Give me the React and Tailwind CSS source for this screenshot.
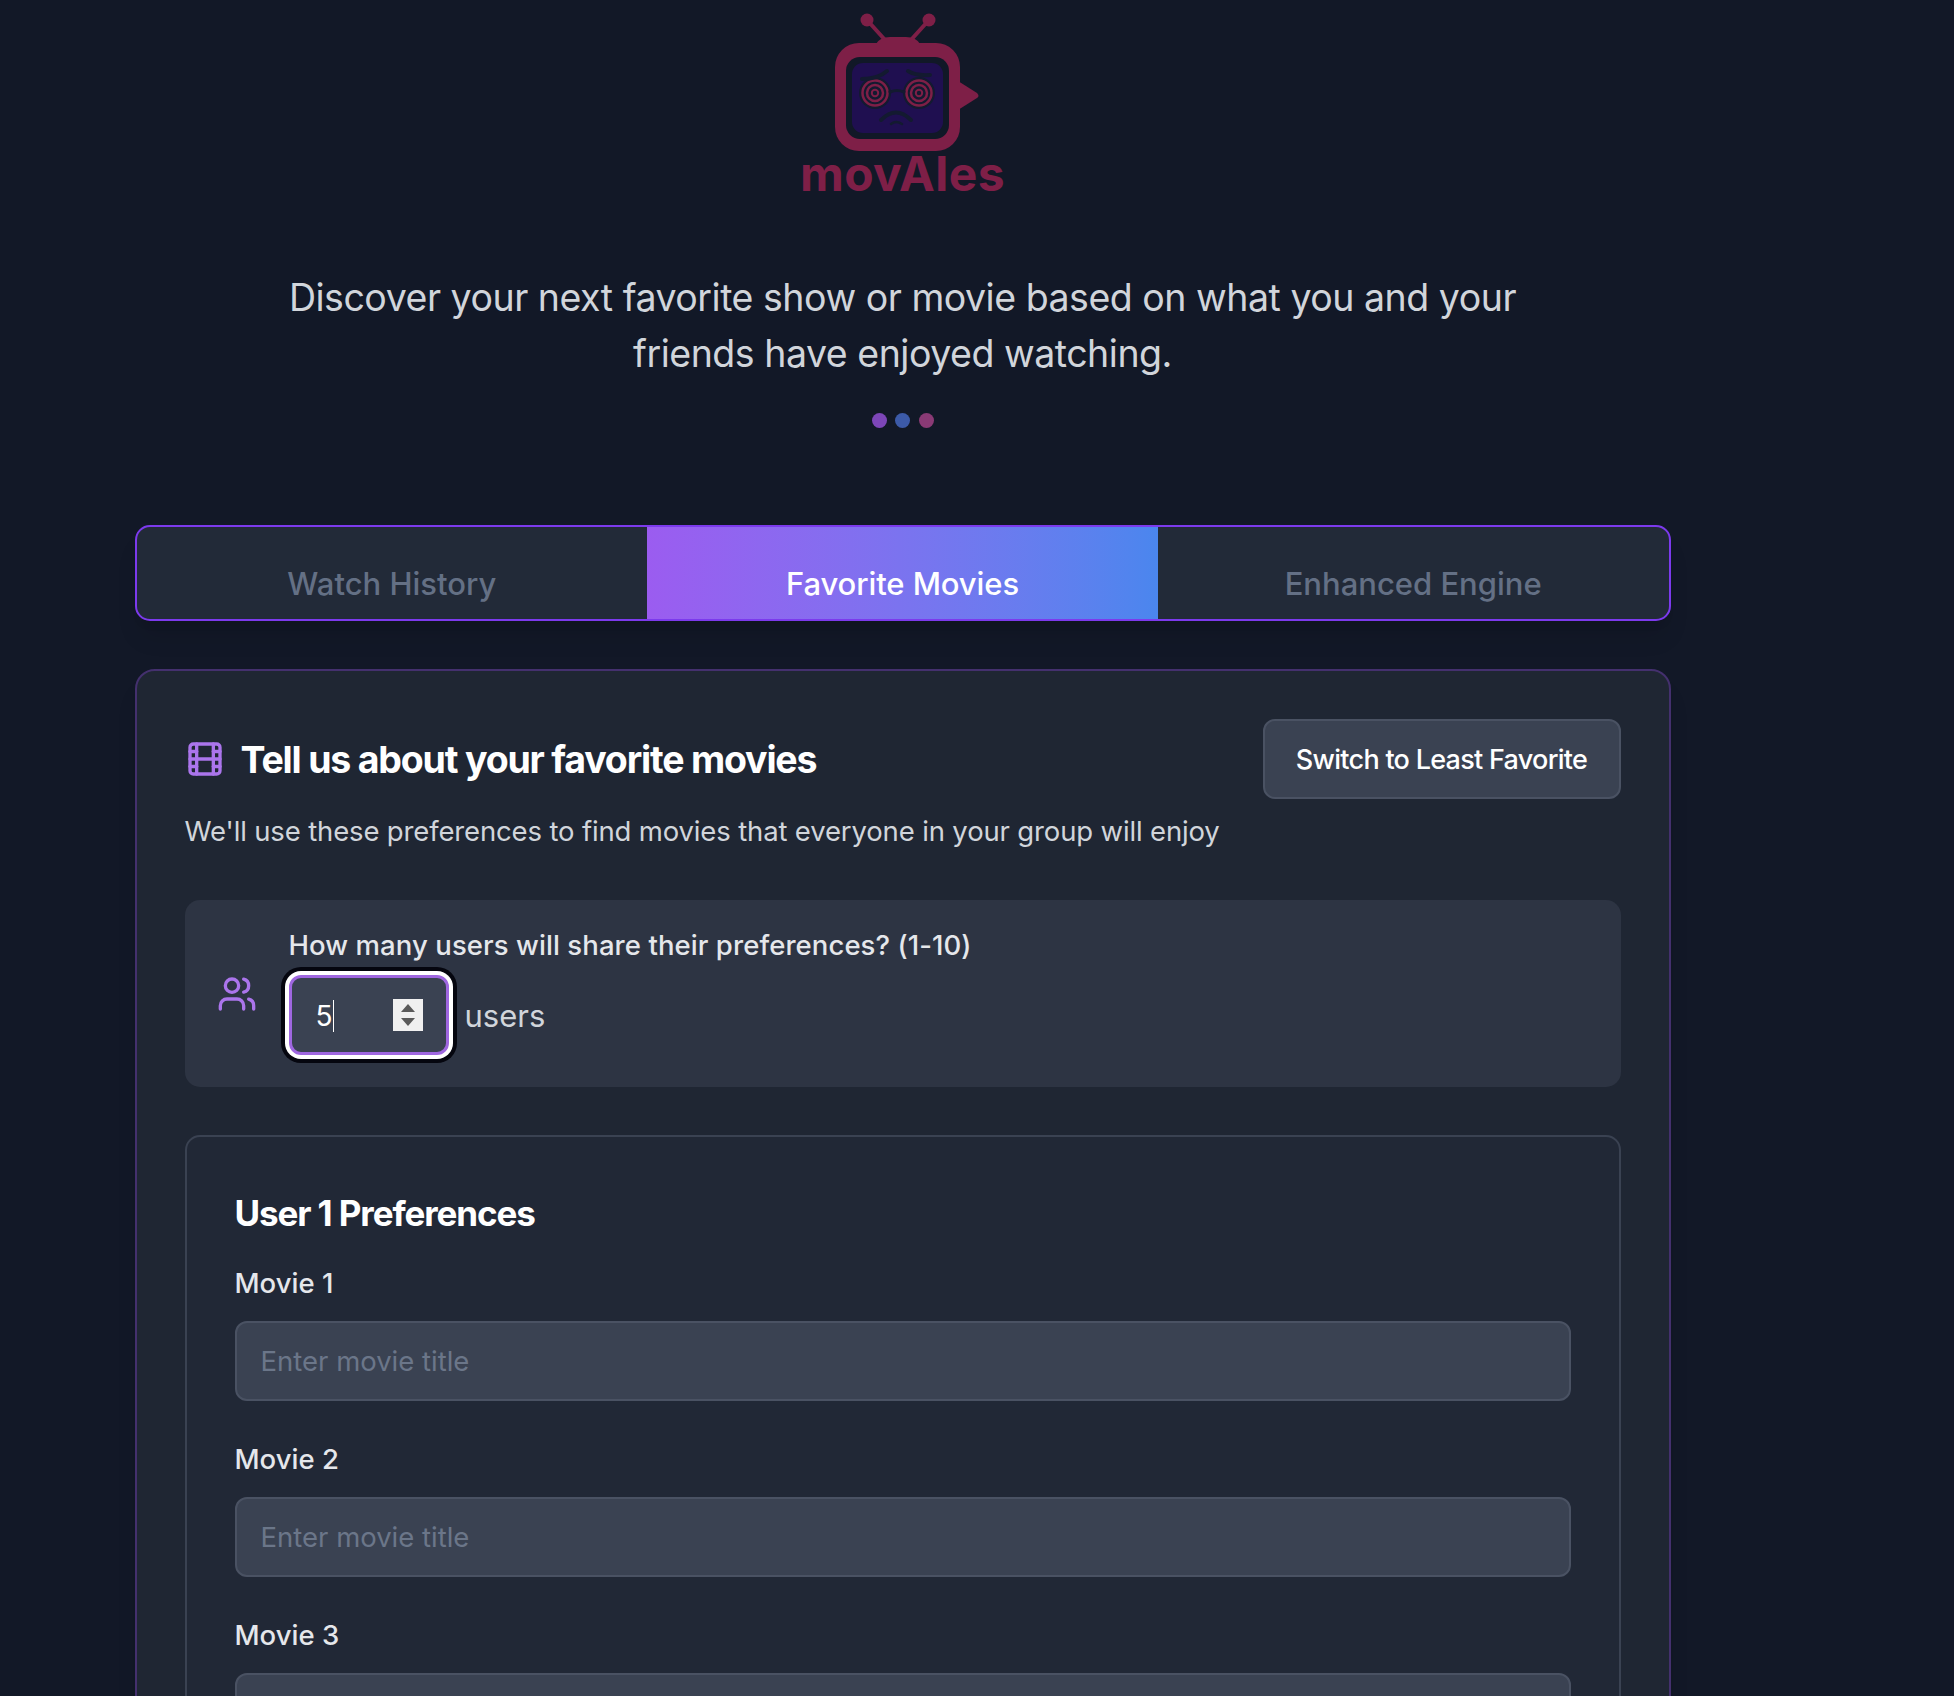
import { Film, Users } from 'lucide-react';

const Logo = () => (
    <svg viewBox="798 0 210 160" className="w-[210px] h-[160px] block">
        <g stroke="#7e1f47" strokeWidth="4" strokeLinecap="round">
            <line x1="867" y1="20" x2="886" y2="41" />
            <line x1="929" y1="20" x2="910" y2="41" />
        </g>
        <circle cx="867" cy="20" r="6.5" fill="#7e1f47" />
        <circle cx="929" cy="20" r="6.5" fill="#7e1f47" />
        <path d="M876 44 Q880 37 890 37 H906 Q916 37 920 44 Z" fill="#7e1f47" />
        <path d="M958 81 L977 93 Q980 96 977 98 L958 110 Z" fill="#7e1f47" />
        <rect x="835" y="43" width="125" height="108" rx="24" fill="#7e1f47" />
        <rect x="846" y="57" width="103" height="82" rx="14" fill="#111827" />
        <rect x="852" y="63" width="91" height="70" rx="11" fill="#1f0f50" />
        <circle cx="875" cy="93" r="16" fill="#131a30" />
        <circle cx="919" cy="93" r="16" fill="#131a30" />
        <g fill="none" stroke="#7e1f47" strokeWidth="2.5">
            <circle cx="875" cy="93" r="12.5" />
            <circle cx="875" cy="93" r="8" />
            <circle cx="875" cy="93" r="3.2" strokeWidth="2" />
            <circle cx="919" cy="93" r="12.5" />
            <circle cx="919" cy="93" r="8" />
            <circle cx="919" cy="93" r="3.2" strokeWidth="2" />
        </g>
        <g fill="none" stroke="#131a30" strokeWidth="4" strokeLinecap="round">
            <path d="M862 79 Q878 79 887 71" />
            <path d="M908 71 Q916 76 930 75" />
            <path d="M890 92 Q897 89 904 92" strokeWidth="3" />
            <path d="M881 120 Q896 105 911 120" />
            <path d="M891 124 Q896 120 902 124" strokeWidth="2.5" />
        </g>
    </svg>
);

const MovieField = ({ label }) => (
    <div className="mb-[40px]">
        <label className="block text-[27.5px] leading-[36px] font-medium text-[#e5e7eb]">{label}</label>
        <input
            type="text"
            placeholder="Enter movie title"
            className="mt-[20px] block w-full h-[80px] px-[24px] rounded-[12px] bg-[#3a4252] border-2 border-[#4a5263] text-[27.5px] text-white placeholder:text-[#6b7689] outline-none"
        />
    </div>
);

const App = () => {
    return (
        <div className="h-screen overflow-hidden bg-[#121827] font-[Inter,sans-serif]">
            <div className="ml-[134.5px] w-[1536px]">
                {/* Header */}
                <div className="flex flex-col items-center">
                    <Logo />
                    <div className="-mt-[6px] h-[40px] leading-[40px] text-[48px] font-bold text-[#7e1f47] tracking-[0.3px]">movAIes</div>
                    <p className="mt-[76px] w-[1240px] text-center text-[37.5px] leading-[56px] text-[#d1d5db] tracking-[-0.48px]">
                        Discover your next favorite show or movie based on what you and your friends have enjoyed watching.
                    </p>
                    <div className="mt-[31px] flex gap-[8.5px]">
                        <span className="w-[15px] h-[15px] rounded-full bg-[#7d46b8]" />
                        <span className="w-[15px] h-[15px] rounded-full bg-[#3c5aa8]" />
                        <span className="w-[15px] h-[15px] rounded-full bg-[#8a3a75]" />
                    </div>
                </div>

                {/* Tabs */}
                <div className="mt-[97px] h-[96px] grid grid-cols-3 rounded-[15px] border-2 border-[#7c3aed] bg-[#222a38] overflow-hidden shadow-xl">
                    <div className="flex items-center justify-center pt-[22px] text-[31px] font-medium text-[#647085]">Watch History</div>
                    <div className="flex items-center justify-center pt-[22px] text-[31px] font-medium tracking-[-0.1px] text-white bg-gradient-to-r from-[#9b5cf0] to-[#4a86ee]">Favorite Movies</div>
                    <div className="flex items-center justify-center pt-[22px] text-[31px] font-medium text-[#647085]">Enhanced Engine</div>
                </div>

                {/* Card */}
                <div className="mt-[48px] rounded-[20px] border-2 border-[#44306e] bg-[#1f2633] px-[48px] pt-[48px] shadow-xl">
                    <div className="flex items-center justify-between">
                        <h2 className="flex items-center gap-[16px] text-[37.5px] font-bold text-white tracking-[-1.2px]">
                            <Film className="w-[40px] h-[40px] text-[#ab75ec]" />
                            <span className="pt-[3px]">Tell us about your favorite movies</span>
                        </h2>
                        <button className="w-[358px] h-[80px] pt-[2px] rounded-[12px] border-2 border-[#4a5263] bg-[#3a4252] text-[27px] font-medium text-white tracking-[-0.72px]">
                            Switch to Least Favorite
                        </button>
                    </div>
                    <p className="mt-[12px] text-[27.5px] leading-[40px] text-[#d1d5db] tracking-[-0.15px]">
                        We'll use these preferences to find movies that everyone in your group will enjoy
                    </p>

                    {/* Number of users */}
                    <div className="mt-[49px] h-[187px] rounded-[15px] bg-[#2d3443] pl-[32px] pt-[27px] flex items-center gap-[32px]">
                        <Users className="w-[40px] h-[40px] text-[#ab75ec] -mt-[27px]" />
                        <div className="self-start">
                            <div className="text-[27.5px] leading-[36px] font-medium text-[#e5e7eb] tracking-[0.08px]">How many users will share their preferences? (1-10)</div>
                            <div className="mt-[12px] flex items-center gap-[16px]">
                                <div className="w-[160px] h-[80px] rounded-[12px] border-[3px] border-[#9f67e0] bg-[#3a4252] shadow-[0_0_0_4px_#ffffff,0_0_0_8px_#05060f] flex items-center justify-between pl-[24px] pr-[23px]">
                                    <span className="flex items-center pt-[2px] text-[28px] text-white">
                                        5<span className="w-[1px] h-[32px] bg-white" />
                                    </span>
                                    <span className="w-[30px] h-[32px] bg-[#f0f0f0] flex items-center justify-center">
                                        <svg viewBox="0 0 30 32" className="w-[30px] h-[32px]">
                                            <path d="M15 5 L22 13 H8 Z" fill="#5a5a5a" />
                                            <path d="M15 27 L22 19 H8 Z" fill="#5a5a5a" />
                                        </svg>
                                    </span>
                                </div>
                                <span className="pt-[2px] text-[31px] text-[#d1d5db]">users</span>
                            </div>
                        </div>
                    </div>

                    {/* User preferences */}
                    <div className="mt-[48px] rounded-[15px] border-2 border-[#3a4252] bg-[#212836] px-[48px] pt-[54px]">
                        <h3 className="text-[35px] leading-[44px] font-bold text-white tracking-[-1.1px]">User 1 Preferences</h3>
                        <div className="mt-[30px]">
                            <MovieField label="Movie 1" />
                            <MovieField label="Movie 2" />
                            <MovieField label="Movie 3" />
                        </div>
                    </div>
                </div>
            </div>
        </div>
    );
};

export default App;
